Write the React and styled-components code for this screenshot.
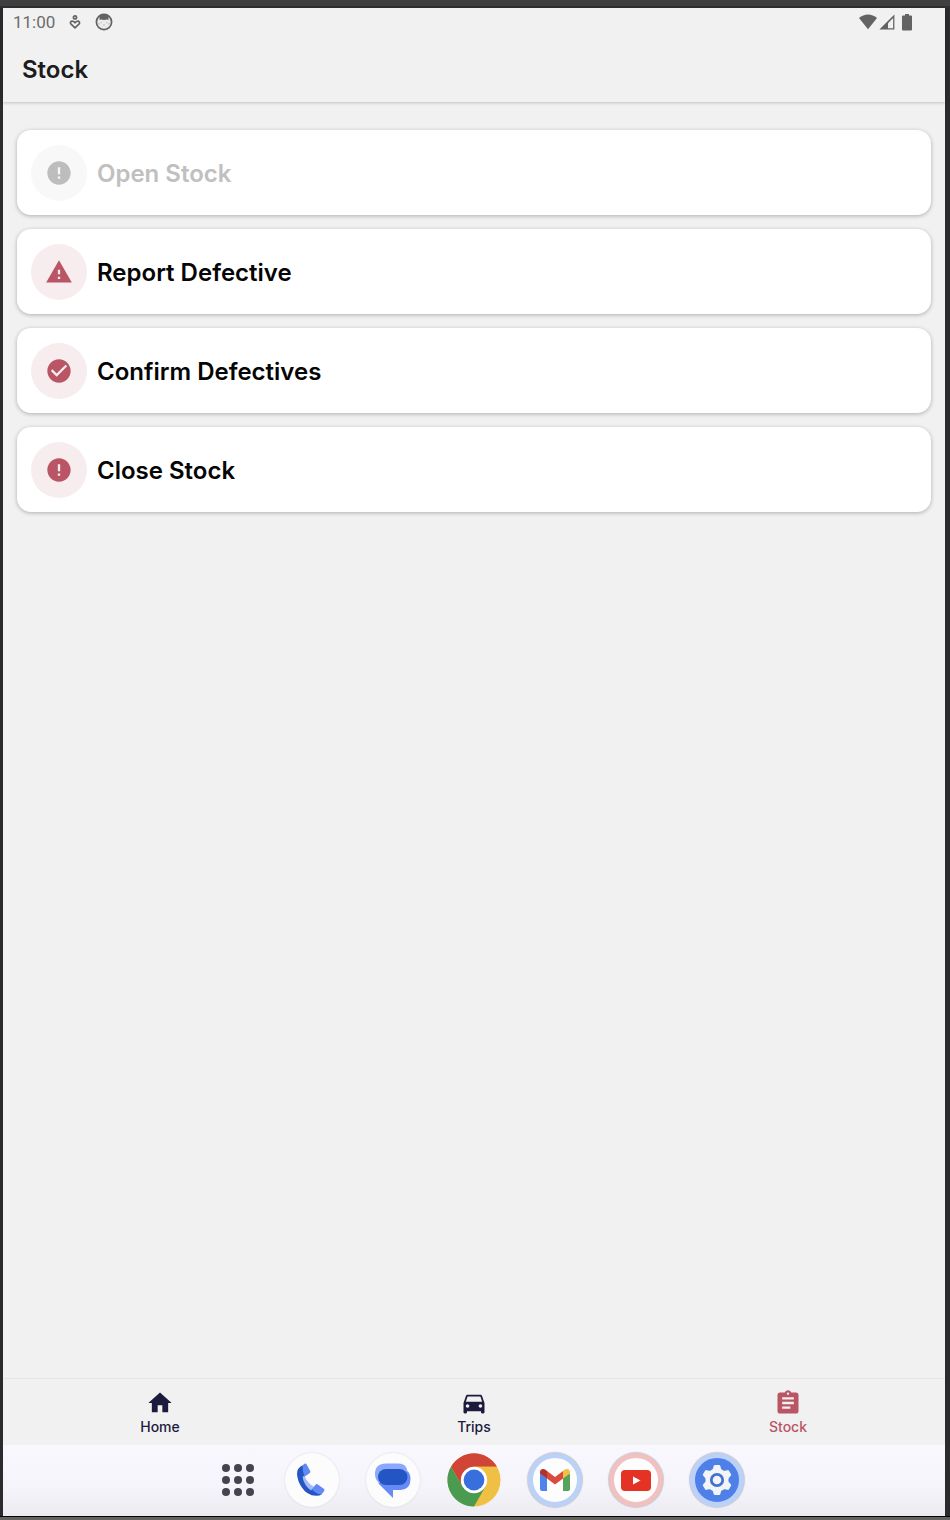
import React from "react";
import styled, { createGlobalStyle } from "styled-components";


const GlobalStyle = createGlobalStyle`
    * {
        box-sizing: border-box;
    }

    body {
        margin: 0;
        background: #2b2b2d;
        font-family: Inter, "Liberation Sans", sans-serif;
    }
`

const SDevice = styled.div`
    display: flex;
    flex-direction: column;
    min-height: 100vh;
    padding: 0 5px 0 3px;
    background: #2b2b2d;
`

const STopEdge = styled.div`
    height: 8px;
    margin: 0 -5px 0 -3px;
    background: #3e3f41;
    border-bottom: 2px solid #2f2f30;
`

const SBottomEdge = styled.div`
    height: 4px;
    margin: 0 -5px 0 -3px;
    background: #636462;
    border-top: 1px solid #050505;
`

const SScreen = styled.div`
    flex: 1;
    display: flex;
    flex-direction: column;
    background: #f1f1f1;
`

const STopBar = styled.header`
    box-shadow: 0 1px 3px rgba(0, 0, 0, 0.2);
`

const SStatusBar = styled.div`
    display: flex;
    justify-content: space-between;
    align-items: center;
    height: 28px;
    padding: 0 33px 0 10px;
    color: #636363;
`

const SStatusGroup = styled.div`
    display: flex;
    align-items: center;
    gap: ${({ $gap }) => $gap}px;

    svg {
        display: block;
    }
`

const STime = styled.time`
    font-family: Roboto, sans-serif;
    font-size: 17px;
    line-height: 20px;
    color: #6c6c6c;
`

const STitle = styled.h1`
    margin: 0;
    padding: 20px 19px 18px;
    font-size: 24px;
    line-height: 28px;
    font-weight: 600;
    color: #1c1c1e;
`

const SMain = styled.main`
    flex: 1;
    display: flex;
    flex-direction: column;
    gap: 14px;
    padding: 28px 14px;
`

const SCard = styled.button`
    display: flex;
    align-items: center;
    gap: 10px;
    width: 100%;
    padding: 15px 14px 14px;
    border: none;
    border-radius: 14px;
    background: #fff;
    box-shadow: 0 1px 4px rgba(0, 0, 0, 0.28);
    font-family: inherit;
    font-size: 24px;
    line-height: 28px;
    font-weight: 600;
    text-align: left;
    color: #050505;
    cursor: pointer;

    &:disabled {
        color: #c0c0c0;
        cursor: default;
    }
`

const SCardIcon = styled.span`
    display: flex;
    justify-content: center;
    align-items: center;
    width: 56px;
    height: 56px;
    border-radius: 50%;
    background: ${({ $muted }) => ($muted ? "#f8f8f8" : "#f7ecee")};
    color: ${({ $muted }) => ($muted ? "#bdbdbd" : "#b95565")};
`

const SCardLabel = styled.span`
    padding-top: 2px;
`

const STabBar = styled.nav`
    display: flex;
    height: 67px;
    border-top: 1px solid #e6e6e6;
`

const STab = styled.a`
    flex: 1;
    display: flex;
    flex-direction: column;
    align-items: center;
    padding-top: 10px;
    font-size: 14px;
    line-height: 20px;
    font-weight: 500;
    text-decoration: none;
    color: ${({ $active }) => ($active ? "#b95565" : "#1c1b3d")};
`

const SDock = styled.div`
    display: flex;
    justify-content: center;
    align-items: center;
    gap: 27px;
    height: 71px;
    padding: 0 0 1px 14px;
    background: linear-gradient(#f9f8ff, #f4f4fa 60%, #ebebf1);
`

const SDockButton = styled.button`
    display: flex;
    justify-content: center;
    align-items: center;
    width: ${({ $width }) => $width || 54}px;
    height: 54px;
    padding: 0;
    border: ${({ $ring }) => ($ring ? `5px solid ${$ring}` : "none")};
    border-radius: 50%;
    background: ${({ $fill }) => $fill || "none"};
    box-shadow: ${({ $shadow }) => $shadow || "none"};
    cursor: pointer;

    svg {
        display: block;
    }
`

const ringShadow = "0 0 1px 1px #c9c9d0"
const softShadow = "0 0 2px rgba(0, 0, 0, 0.14)"

const paths = {
    error: "M12 2C6.48 2 2 6.48 2 12s4.48 10 10 10 10-4.48 10-10S17.52 2 12 2zm1 15h-2v-2h2v2zm0-4h-2V7h2v6z",
    warning: "M1 21h22L12 2 1 21zm12-3h-2v-2h2v2zm0-4h-2v-4h2v4z",
    check: "M12 2C6.48 2 2 6.48 2 12s4.48 10 10 10 10-4.48 10-10S17.52 2 12 2zm-2 15l-5-5 1.41-1.41L10 14.17l7.59-7.59L19 8l-9 9z",
    home: "M10 20v-6h4v6h5v-8h3L12 3 2 12h3v8z",
    car: "M18.92 6.01C18.72 5.42 18.16 5 17.5 5h-11c-.66 0-1.21.42-1.42 1.01L3 12v8c0 .55.45 1 1 1h1c.55 0 1-.45 1-1v-1h12v1c0 .55.45 1 1 1h1c.55 0 1-.45 1-1v-8l-2.08-5.99zM6.5 16c-.83 0-1.5-.67-1.5-1.5S5.67 13 6.5 13s1.5.67 1.5 1.5S7.33 16 6.5 16zm11 0c-.83 0-1.5-.67-1.5-1.5s.67-1.5 1.5-1.5 1.5.67 1.5 1.5-.67 1.5-1.5 1.5zM5 11l1.5-4.5h11L19 11H5z",
    stock: "M19 3h-4.18C14.4 1.84 13.3 1 12 1c-1.3 0-2.4.84-2.82 2H5c-1.1 0-2 .9-2 2v14c0 1.1.9 2 2 2h14c1.1 0 2-.9 2-2V5c0-1.1-.9-2-2-2zm-7 0c.55 0 1 .45 1 1s-.45 1-1 1-1-.45-1-1 .45-1 1-1zm2 14H7v-2h7v2zm3-4H7v-2h10v2zm0-4H7V7h10v2z",
}

function Icon({ name }) {
    return (
        <svg width="28" height="28" viewBox="0 0 24 24" fill="currentColor" aria-hidden="true">
            <path d={paths[name]} />
        </svg>
    )
}

function HeartPersonIcon() {
    return (
        <svg width="12" height="16" viewBox="0 0 12 16" fill="none" stroke="currentColor" strokeWidth="1.7">
            <circle cx="6" cy="3.4" r="1.6" />
            <path d="M6 13.800L2.100 10.200C.8 8.800 1.500 7.200 3 7.200c1.200 0 2.100.5 3 1.500.9-1 1.800-1.500 3-1.500 1.500 0 2.200 1.600.9 3z" />
        </svg>
    )
}

function FaceIcon() {
    return (
        <svg width="18" height="18" viewBox="0 0 18 18">
            <circle cx="9" cy="9" r="7.600" fill="#ececec" stroke="currentColor" strokeWidth="1.700" />
            <path d="M4.500 2.500Q9-.2 13.500 2.500V7l-1.700-.5L9 7l-2.800-.5L4.500 7z" fill="currentColor" />
            <path d="M6 9v1.200M12 9v1.200M3 10.800l1.600.2M15 10.800l-1.600.2M8.200 12h1.600" stroke="#b4b4b4" strokeWidth="1" />
        </svg>
    )
}

function WifiIcon() {
    return (
        <svg width="18" height="16" viewBox="0 0 18 16" fill="currentColor">
            <path d="M9 15.300L0 4Q4 .4 9 .4T18 4z" />
        </svg>
    )
}

function SignalIcon() {
    return (
        <svg width="16" height="16" viewBox="0 0 16 16">
            <path d="M15.400.5v15H.4z" fill="currentColor" />
            <path d="M14.100 4v10.200H9V9.200z" fill="#f1f1f1" />
        </svg>
    )
}

function BatteryIcon() {
    return (
        <svg width="10" height="17" viewBox="0 0 10 17" fill="currentColor">
            <path d="M3 0h4v1.500h2q1 0 1 1v13q0 1-1 1H1q-1 0-1-1v-13q0-1 1-1h2z" />
        </svg>
    )
}

function AppsIcon() {
    return (
        <svg width="32" height="32" viewBox="0 0 32 32" fill="#45434e">
            {[4, 16, 28].map((y) => [4, 16, 28].map((x) => (
                <circle key={`${x}-${y}`} cx={x} cy={y} r="4" />
            )))}
        </svg>
    )
}

function PhoneIcon() {
    return (
        <svg width="54" height="54" viewBox="0 0 54 54">
            <path d="M18.300 12Q12 14.500 12 21q.5 7 4.500 13Q22 42.500 31 42.800q4 0 5.500-1.300L27.500 36 20 26z" fill="#2355c4" />
            <path d="M19.300 22.500q3 8 9.700 11.200L26 37.500Q19 32.500 17.500 24z" fill="#a3b9fb" />
            <path d="M17.500 12.500l2-1.700q1.300-1 2.200.6l3.500 6.600q.6 1.200-.4 2l-5.300 3.800Q17.300 17 17.500 12.500z" fill="#6288f6" />
            <path d="M26.800 36.200l3.700-4.400q1-1.200 2.400-.3l5.900 4.300q1.200 1 .4 2.300L36.500 41.500Q31 41 26.800 36.200z" fill="#6288f6" />
        </svg>
    )
}

function MessagesIcon() {
    return (
        <svg width="54" height="54" viewBox="0 0 54 54">
            <path d="M20 16h18q6.500 2.500 6.500 10 0 10.500-10 11H27v8L12.500 30.500z" fill="#668bf7" />
            <path d="M20 10.500h12.500q8 0 9 8L13 30q-4-3.500-4-9 0-10.500 11-10.500z" fill="#8ca8fa" />
            <rect x="12" y="16" width="29.500" height="16" rx="8" fill="#2355c4" />
        </svg>
    )
}

function ChromeIcon() {
    return (
        <svg width="54" height="54" viewBox="0 0 54 54">
            <circle cx="27" cy="27" r="26.500" fill="#f0c044" />
            <path d="M4 13.700A26.500 26.500 0 0 1 50 13.700H27L15.500 33.600z" fill="#d04535" />
            <path d="M4 13.700A26.500 26.500 0 0 0 27 53.500L38.500 33.600H15.500z" fill="#4a9a50" />
            <path d="M27 13.700h23L38.500 33.600z" fill="#f0c044" />
            <circle cx="27" cy="27" r="13.200" fill="#fff" />
            <circle cx="27" cy="27" r="10.400" fill="#386fdd" />
        </svg>
    )
}

function GmailIcon() {
    return (
        <svg width="30" height="24" viewBox="0 0 30 24">
            <path d="M0 5l7 5v13H2q-2 0-2-2z" fill="#4f82ea" />
            <path d="M23 10l7-5v16q0 2-2 2h-5z" fill="#55a45a" />
            <path d="M7 3l8 6 8-6v7.500l-8 6-8-6z" fill="#d94b3d" />
            <path d="M0 4.200C0 .8 3.500 0 5.800 2L7 3v7.500L0 5.500z" fill="#b3322c" />
            <path d="M30 4.200C30 .8 26.500 0 24.200 2L23 3v7.500l7-5z" fill="#f0c044" />
        </svg>
    )
}

function YoutubeIcon() {
    return (
        <svg width="30" height="21" viewBox="0 0 30 21">
            <rect width="30" height="21" rx="4" fill="#e43225" />
            <path d="M12 6.500v8l7.500-4z" fill="#fff" />
        </svg>
    )
}

function SettingsIcon() {
    return (
        <svg width="32" height="32" viewBox="0 0 32 32">
            <g fill="#f3f4f6">
                <circle cx="16" cy="16" r="11.500" />
                {[0, 60, 120, 180, 240, 300].map((angle) => (
                    <path key={angle} d="M11.500 6l1.200-4q.3-1 1.200-1h4.200q.9 0 1.200 1l1.200 4z" transform={`rotate(${angle} 16 16)`} />
                ))}
            </g>
            <circle cx="16" cy="16" r="5.700" fill="#f3f4f6" stroke="#4472cf" strokeWidth="2.800" />
        </svg>
    )
}

const actions = [
    { label: "Open Stock", icon: "error", disabled: true },
    { label: "Report Defective", icon: "warning" },
    { label: "Confirm Defectives", icon: "check" },
    { label: "Close Stock", icon: "error" },
]

const tabs = [
    { label: "Home", icon: "home" },
    { label: "Trips", icon: "car" },
    { label: "Stock", icon: "stock", active: true },
]

const dockApps = [
    { label: "Phone", Logo: PhoneIcon, fill: "#fcfcfd", shadow: softShadow },
    { label: "Messages", Logo: MessagesIcon, fill: "#fcfcfd", shadow: softShadow },
    { label: "Chrome", Logo: ChromeIcon },
    { label: "Gmail", Logo: GmailIcon, fill: "#fdfdfd", ring: "#bcd1f7", shadow: ringShadow },
    { label: "YouTube", Logo: YoutubeIcon, fill: "#fdfdfd", ring: "#f1c1c1", shadow: ringShadow },
    { label: "Settings", Logo: SettingsIcon, fill: "#4f80e8", ring: "#bcd1f7", shadow: ringShadow },
]

export default function App() {
    return (
        <SDevice>
            <GlobalStyle />
            <STopEdge />
            <SScreen>
                <STopBar>
                    <SStatusBar>
                        <SStatusGroup $gap={14}>
                            <STime>11:00</STime>
                            <HeartPersonIcon />
                            <FaceIcon />
                        </SStatusGroup>
                        <SStatusGroup $gap={7}>
                            <SStatusGroup $gap={2}>
                                <WifiIcon />
                                <SignalIcon />
                            </SStatusGroup>
                            <BatteryIcon />
                        </SStatusGroup>
                    </SStatusBar>
                    <STitle>Stock</STitle>
                </STopBar>

                <SMain>
                    {actions.map(({ label, icon, disabled }) => (
                        <SCard key={label} type="button" disabled={disabled}>
                            <SCardIcon $muted={disabled}>
                                <Icon name={icon} />
                            </SCardIcon>
                            <SCardLabel>{label}</SCardLabel>
                        </SCard>
                    ))}
                </SMain>

                <STabBar>
                    {tabs.map(({ label, icon, active }) => (
                        <STab key={label} href={`#${label.toLowerCase()}`} $active={active}>
                            <Icon name={icon} />
                            {label}
                        </STab>
                    ))}
                </STabBar>

                <SDock>
                    <SDockButton type="button" aria-label="All apps" $width={40}>
                        <AppsIcon />
                    </SDockButton>
                    {dockApps.map(({ label, Logo, fill, ring, shadow }) => (
                        <SDockButton key={label} type="button" aria-label={label} $fill={fill} $ring={ring} $shadow={shadow}>
                            <Logo />
                        </SDockButton>
                    ))}
                </SDock>
            </SScreen>
            <SBottomEdge />
        </SDevice>
    )
}
